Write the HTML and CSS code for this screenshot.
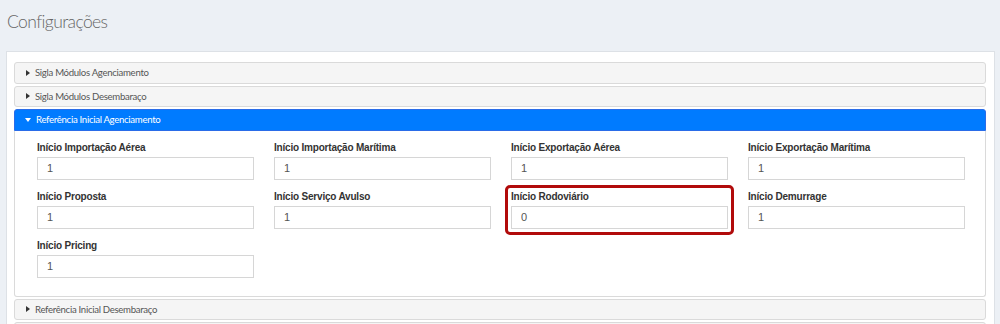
FILE: index.html
```html
<!DOCTYPE html>
<html lang="pt-BR">
<head>
<meta charset="utf-8">
<title>Configurações</title>
<link rel="stylesheet" href="styles.css">
</head>
<body>
<div class="page">
  <h1 class="title">Configurações</h1>
  <div class="card">
    <div class="panel">
      <div class="panel-head"><span class="caret"></span>Sigla Módulos Agenciamento</div>
    </div>
    <div class="panel">
      <div class="panel-head"><span class="caret"></span>Sigla Módulos Desembaraço</div>
    </div>
    <div class="panel open">
      <div class="panel-head"><span class="caret"></span>Referência Inicial Agenciamento</div>
      <div class="panel-body">
        <div class="field"><label>Início Importação Aérea</label><input type="text" value="1"></div>
        <div class="field"><label>Início Importação Marítima</label><input type="text" value="1"></div>
        <div class="field"><label>Início Exportação Aérea</label><input type="text" value="1"></div>
        <div class="field"><label>Início Exportação Marítima</label><input type="text" value="1"></div>
        <div class="field"><label>Início Proposta</label><input type="text" value="1"></div>
        <div class="field"><label>Início Serviço Avulso</label><input type="text" value="1"></div>
        <div class="field highlight"><label>Início Rodoviário</label><input type="text" value="0"></div>
        <div class="field"><label>Início Demurrage</label><input type="text" value="1"></div>
        <div class="field"><label>Início Pricing</label><input type="text" value="1"></div>
      </div>
    </div>
    <div class="panel">
      <div class="panel-head"><span class="caret"></span>Referência Inicial Desembaraço</div>
    </div>
    <div class="panel">
      <div class="panel-head"></div>
    </div>
  </div>
</div>
</body>
</html>
```

FILE: styles.css
```css
html, body {
  margin: 0;
  padding: 0;
  background: #ecf0f5;
  overflow: hidden;
}
.page {
  padding: 0 5px 0 6px;
}
.title {
  margin: 0;
  height: 51px;
  box-sizing: border-box;
  padding: 9px 0 0 1px;
  font-family: "Lato", "Open Sans", sans-serif;
  font-weight: 300;
  font-size: 17.5px;
  line-height: 26px;
  color: #666;
  letter-spacing: -0.6px;
}
.card {
  background: #fff;
  border: 1px solid #dde1e6;
  padding: 10px 8px 10px 7px;
}
.panel {
  margin-bottom: 2px;
}
.panel-head {
  height: 21.5px;
  box-sizing: border-box;
  display: flex;
  align-items: center;
  padding-left: 11px;
  background: #f5f5f5;
  border: 1px solid #dadada;
  border-radius: 3px;
  font-family: "Lato", "Open Sans", sans-serif;
  font-size: 9.6px;
  color: #555;
  letter-spacing: -0.3px;
}
.caret {
  width: 0;
  height: 0;
  border-top: 3px solid transparent;
  border-bottom: 3px solid transparent;
  border-left: 4px solid #333;
  margin-right: 5px;
}
.open .panel-head {
  background: #007bff;
  border-color: #2a6ce8;
  color: #fff;
  border-radius: 3px 3px 0 0;
}
.open .caret {
  border-left: 3px solid transparent;
  border-right: 3px solid transparent;
  border-top: 4px solid #fff;
  border-bottom: 0;
  margin-right: 5px;
  margin-left: -1px;
}
.panel-body {
  border: 1px solid #dadada;
  border-top: 0;
  border-radius: 0 0 3px 3px;
  padding: 10px 21px 8px 22px;
  display: grid;
  grid-template-columns: repeat(4, 217px);
  column-gap: 20px;
}
.field {
  position: relative;
  display: flex;
  flex-direction: column;
  margin-bottom: 10px;
}
.field label {
  font-family: "Liberation Sans", Arial, sans-serif;
  font-weight: bold;
  font-size: 10px;
  line-height: 13px;
  color: #333;
  margin-bottom: 3px;
  letter-spacing: -0.2px;
}
.field input {
  height: 23px;
  box-sizing: border-box;
  border: 1px solid #d6d6d6;
  padding: 0 9px;
  font-family: "Liberation Sans", Arial, sans-serif;
  font-size: 11px;
  color: #555;
  background: #fff;
  outline: none;
  margin: 0;
  width: 100%;
}
.highlight::after {
  content: "";
  position: absolute;
  left: -6px;
  right: -6px;
  top: -5px;
  bottom: -6px;
  border: 3px solid #b10b0b;
  border-radius: 5px;
  pointer-events: none;
}
```
